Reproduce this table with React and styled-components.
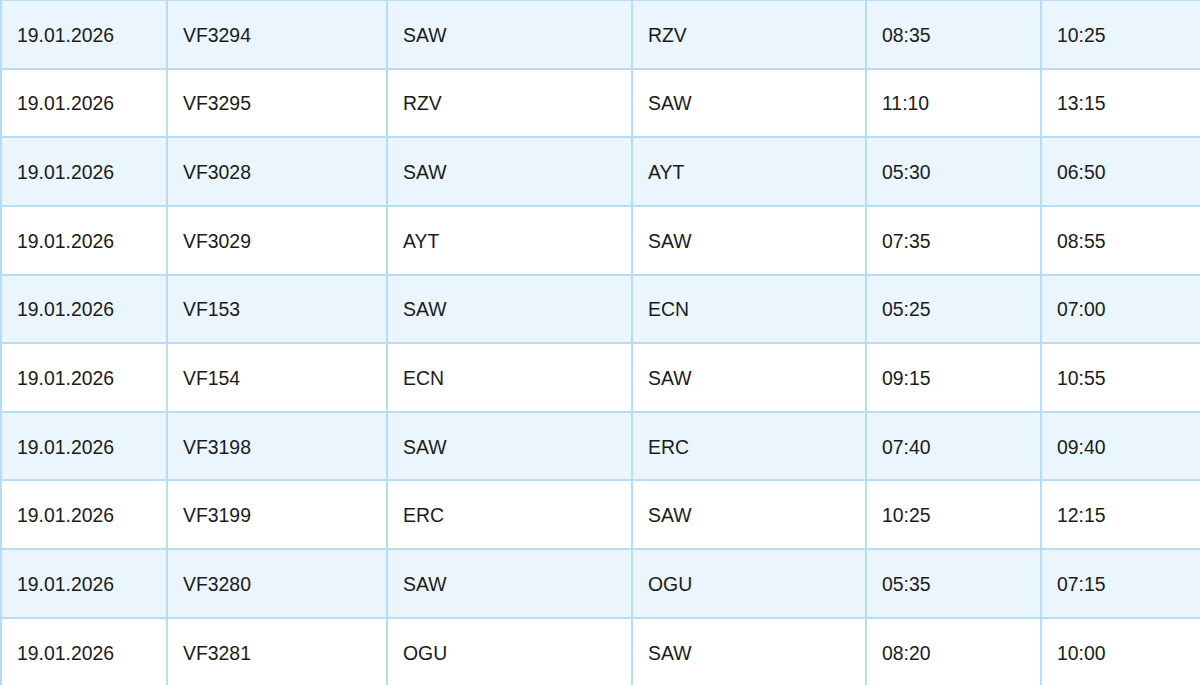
import React from 'react';
import styled, { createGlobalStyle } from 'styled-components';

const flights = [
  ['19.01.2026', 'VF3294', 'SAW', 'RZV', '08:35', '10:25'],
  ['19.01.2026', 'VF3295', 'RZV', 'SAW', '11:10', '13:15'],
  ['19.01.2026', 'VF3028', 'SAW', 'AYT', '05:30', '06:50'],
  ['19.01.2026', 'VF3029', 'AYT', 'SAW', '07:35', '08:55'],
  ['19.01.2026', 'VF153', 'SAW', 'ECN', '05:25', '07:00'],
  ['19.01.2026', 'VF154', 'ECN', 'SAW', '09:15', '10:55'],
  ['19.01.2026', 'VF3198', 'SAW', 'ERC', '07:40', '09:40'],
  ['19.01.2026', 'VF3199', 'ERC', 'SAW', '10:25', '12:15'],
  ['19.01.2026', 'VF3280', 'SAW', 'OGU', '05:35', '07:15'],
  ['19.01.2026', 'VF3281', 'OGU', 'SAW', '08:20', '10:00'],
];

const widths = [166, 220, 245, 234, 175, 162];

const GlobalStyle = createGlobalStyle`
  body {
    margin: 0;
    background: #ffffff;
    overflow: hidden;
  }
`;

const Page = styled.div`
  width: 1200px;
  height: 685px;
  overflow: hidden;
`;

const Table = styled.table`
  border-collapse: collapse;
  table-layout: fixed;
  width: 1202px;
  margin-top: -1px;
  font-family: "Liberation Sans", Arial, sans-serif;
  font-size: 19.4px;
  color: #1b1b1b;
`;

const Row = styled.tr`
  height: 68.65px;
  background: ${(props) => (props.$shaded ? '#eaf5fe' : '#ffffff')};
`;

const Cell = styled.td`
  border: 2px solid #b8dcf4;
  padding: 2px 0 0 15px;
  vertical-align: middle;
  white-space: nowrap;
`;

const App = () => (
  <Page>
    <GlobalStyle />
    <Table>
      <colgroup>
        {widths.map((w, i) => (
          <col key={i} style={{ width: w }} />
        ))}
      </colgroup>
      <tbody>
        {flights.map((f, i) => (
          <Row key={f[1]} $shaded={i % 2 === 0}>
            {f.map((v, j) => (
              <Cell key={j}>{v}</Cell>
            ))}
          </Row>
        ))}
      </tbody>
    </Table>
  </Page>
);

export default App;
